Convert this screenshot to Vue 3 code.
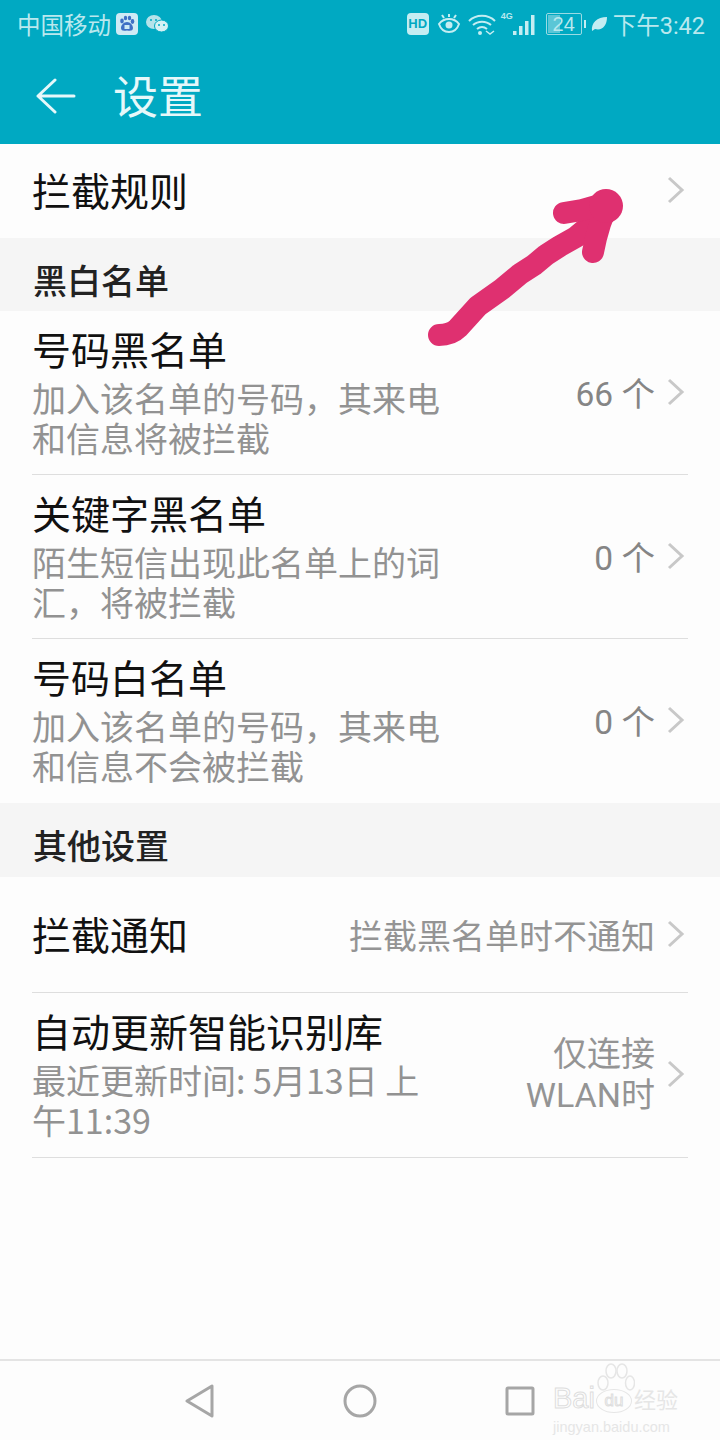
<script setup>
const blacklist = [
  { title: '号码黑名单', desc: '加入该名单的号码，其来电和信息将被拦截', value: '66 个' },
  { title: '关键字黑名单', desc: '陌生短信出现此名单上的词汇，将被拦截', value: '0 个' },
  { title: '号码白名单', desc: '加入该名单的号码，其来电和信息不会被拦截', value: '0 个' },
]
</script>

<template>
  <div class="page">
    <header class="head">
      <div class="status">
        <span class="carrier">中国移动</span>
        <svg class="baidu" width="22" height="22" viewBox="0 0 22 22">
          <rect x="0" y="0" width="22" height="22" rx="4" fill="#cfeaf5" />
          <g fill="#3f6fc4">
            <ellipse cx="6" cy="8" rx="1.800" ry="2.400" />
            <ellipse cx="9.500" cy="5" rx="1.700" ry="2.300" />
            <ellipse cx="13.500" cy="5" rx="1.700" ry="2.300" />
            <ellipse cx="16.500" cy="8.500" rx="1.800" ry="2.400" />
            <path d="M11 9c-3 0-6 3-6 6 0 3 3 3 6 2.400 3 .6 6 .6 6-2.400 0-3-3-6-6-6z" />
          </g>
          <rect x="8.500" y="12" width="5" height="4" fill="#cfeaf5" />
        </svg>
        <svg class="wechat" width="24" height="20" viewBox="0 0 24 20">
          <ellipse cx="9" cy="8" rx="8" ry="7" fill="#b5e3ea" />
          <ellipse cx="16.500" cy="12" rx="7" ry="6" fill="#d6f1f4" stroke="#00a9c2" stroke-width="1" />
          <circle cx="6" cy="6" r="1" fill="#00a9c2" />
          <circle cx="11" cy="6" r="1" fill="#00a9c2" />
          <circle cx="14" cy="11" r="1" fill="#00a9c2" />
          <circle cx="19" cy="11" r="1" fill="#00a9c2" />
        </svg>
        <span class="grow"></span>
        <span class="hd">HD</span>
        <svg class="eye" width="24" height="22" viewBox="0 0 24 22" fill="none" stroke="#c4edf2" stroke-width="2">
          <path d="M2 11c3-4 6-5 10-5s7 1 10 5c-2 6-6 8-10 8s-8-2-10-8z" />
          <circle cx="12" cy="12" r="3.500" fill="#c4edf2" stroke="none" />
          <path d="M12 1v3M5 2l2 3M19 2l-2 3" />
        </svg>
        <svg class="wifi" width="28" height="24" viewBox="0 0 28 24" fill="none" stroke="#c4edf2" stroke-width="2">
          <path d="M1 9c7-7 19-7 26 0M5 13c5-4.500 13-4.500 18 0M9 17c3-2.500 7-2.500 10 0" />
          <circle cx="12" cy="21" r="2" fill="#c4edf2" stroke="none" />
          <path d="M18 19l4 3 4-3" stroke-width="1.500" />
        </svg>
        <span class="net">4G</span>
        <svg class="signal" width="22" height="24" viewBox="0 0 22 24" fill="#c4edf2">
          <rect x="0" y="19" width="3.500" height="4" />
          <rect x="6" y="14" width="3.500" height="9" />
          <rect x="12" y="9" width="3.500" height="14" />
          <rect x="18" y="3" width="3.500" height="20" />
        </svg>
        <div class="battery"><span class="level"></span><span class="pct">24</span></div>
        <svg class="leaf" width="16" height="16" viewBox="0 0 16 16">
          <path d="M1 15C0 7 6 1 16 1c0 9-5 14-12 12z" fill="#c4edf2" />
        </svg>
        <span class="time">下午3:42</span>
      </div>
      <div class="bar">
        <svg class="back" width="40" height="36" viewBox="0 0 40 36" fill="none" stroke="#e6f8fa" stroke-width="3" stroke-linecap="round" stroke-linejoin="round">
          <path d="M19 2L2 18l17 16M2 18h36" />
        </svg>
        <span class="title">设置</span>
      </div>
    </header>

    <div class="row single first">
      <span class="name">拦截规则</span>
      <svg class="chevron" width="18" height="28" viewBox="0 0 18 28"><path d="M2 2l13 12L2 26" /></svg>
    </div>

    <div class="section">黑白名单</div>
    <div v-for="item in blacklist" :key="item.title" class="row listed">
      <div class="main">
        <div class="name">{{ item.title }}</div>
        <div class="desc">{{ item.desc }}</div>
      </div>
      <span class="value">{{ item.value }}</span>
      <svg class="chevron" width="18" height="28" viewBox="0 0 18 28"><path d="M2 2l13 12L2 26" /></svg>
    </div>

    <div class="section other">其他设置</div>
    <div class="row single notify">
      <span class="name">拦截通知</span>
      <span class="value small">拦截黑名单时不通知</span>
      <svg class="chevron" width="18" height="28" viewBox="0 0 18 28"><path d="M2 2l13 12L2 26" /></svg>
    </div>
    <div class="row update">
      <div class="main wide">
        <div class="name">自动更新智能识别库</div>
        <div class="desc">最近更新时间: 5月13日 上午11:39</div>
      </div>
      <span class="value small wrap">仅连接<br />WLAN时</span>
      <svg class="chevron" width="18" height="28" viewBox="0 0 18 28"><path d="M2 2l13 12L2 26" /></svg>
    </div>

    <div class="spacer"></div>

    <nav class="nav">
      <svg width="30" height="34" viewBox="0 0 30 34" fill="none" stroke="#a6a6a6" stroke-width="3" stroke-linejoin="round">
        <path d="M27 2v30L2 17z" />
      </svg>
      <svg width="34" height="34" viewBox="0 0 34 34" fill="none" stroke="#a6a6a6" stroke-width="3">
        <circle cx="17" cy="17" r="15" />
      </svg>
      <svg width="30" height="30" viewBox="0 0 30 30" fill="none" stroke="#a6a6a6" stroke-width="3">
        <rect x="2" y="2" width="26" height="26" rx="1" />
      </svg>
    </nav>

    <div class="mark">
      <svg class="paw" width="38" height="30" viewBox="0 0 38 30" fill="none" stroke="#e6e6e6" stroke-width="1.500">
        <ellipse cx="6" cy="20" rx="5" ry="7" />
        <ellipse cx="14" cy="8" rx="5" ry="7" />
        <ellipse cx="25" cy="8" rx="5" ry="7" />
        <ellipse cx="33" cy="20" rx="4.500" ry="7" />
      </svg>
      <div class="mark-top">Bai<span class="du">du</span><span class="jy">经验</span></div>
      <div class="mark-url">jingyan.baidu.com</div>
    </div>

    <!-- hand drawn arrow on top of the screenshot -->
    <svg class="scribble" width="720" height="360" viewBox="0 0 720 360" fill="none" stroke="#df3070" stroke-width="22" stroke-linecap="round" stroke-linejoin="round">
      <path d="M439 335c8 0 14-2 19-7l20-22 24-17 18-15 14-9 12-10 14-9 16-9 12-10 18-14" />
      <path d="M564 213l18-3 14-4 12-2M606 208l-6 16-4 14-3 14" />
      <circle cx="606" cy="206" r="17" fill="#df3070" stroke="none" />
    </svg>
  </div>
</template>

<style scoped>
.page {
  position: relative;
  width: 720px;
  height: 1440px;
  overflow: hidden;
  display: flex;
  flex-direction: column;
  background: #fdfdfd;
  font-family: "Noto Sans CJK SC", "Liberation Sans", sans-serif;
}

.head {
  background: #00a9c2;
  height: 144px;
  flex-shrink: 0;
}

.status {
  height: 48px;
  display: flex;
  align-items: center;
  padding: 0 15px 0 17px;
  color: #b9e8ee;
  font-size: 23.500px;
}

.carrier {
  margin-right: 5px;
}

.wechat {
  margin-left: 7px;
}

.grow {
  flex: 1;
}

.hd {
  width: 22px;
  height: 22px;
  border-radius: 4px;
  background: #c4edf2;
  color: #00a9c2;
  font: bold 13px "Liberation Sans", sans-serif;
  line-height: 22px;
  text-align: center;
}

.eye {
  margin-left: 8px;
}

.wifi {
  margin-left: 7px;
}

.net {
  font: bold 9px "Liberation Sans", sans-serif;
  margin: -16px 0 0 5px;
  width: 12px;
}

.battery {
  position: relative;
  width: 34px;
  height: 20px;
  margin-left: 11px;
  border: 1px solid #9adbe4;
  border-radius: 2px;
  font: 20px/20px "Liberation Sans", sans-serif;
  text-align: center;
}

.battery .level {
  position: absolute;
  left: 1px;
  top: 1px;
  bottom: 1px;
  width: 36%;
  background: #5bc6d6;
}

.battery .pct {
  position: relative;
}

.battery::after {
  content: "";
  position: absolute;
  right: -5px;
  top: 6px;
  width: 2px;
  height: 8px;
  background: #c4edf2;
}

.leaf {
  margin-left: 9px;
}

.time {
  margin-left: 6px;
  font-family: Roboto, "Noto Sans CJK SC", sans-serif;
}

.bar {
  height: 96px;
  display: flex;
  align-items: center;
  padding-left: 36px;
}

.title {
  margin-left: 37px;
  margin-top: -3px;
  color: #e6f8fa;
  font-size: 45px;
  line-height: 1;
}

.row {
  position: relative;
  display: flex;
  align-items: center;
  margin: 0 32px;
  height: 164px;
  flex-shrink: 0;
  border-bottom: 1px solid #dedede;
  box-sizing: border-box;
}

.row.listed:nth-of-type(5) {
  border-bottom: 0;
}

.row.single {
  height: 94px;
  border-bottom: 0;
}

.row.notify {
  height: 116px;
  border-bottom: 1px solid #dedede;
}

.row.update {
  height: 165px;
}

.main {
  width: 410px;
  flex-shrink: 0;
}

.main.wide {
  width: 392px;
}

.name {
  color: #111;
  font-size: 39px;
  line-height: 50px;
  margin-top: -5px;
  white-space: nowrap;
}

.row.single .name {
  line-height: 1;
  margin-top: -3px;
}

.desc {
  margin-top: 5px;
  color: #929292;
  font-size: 34px;
  line-height: 40px;
}

.value {
  margin-left: auto;
  margin-right: 12px;
  margin-top: -3px;
  color: #858585;
  font-size: 33.500px;
  font-family: Roboto, "Noto Sans CJK SC", sans-serif;
  white-space: nowrap;
}

.value.small {
  color: #949494;
  margin-top: 0;
  font-size: 34px;
}

.value.wrap {
  text-align: right;
  line-height: 41px;
}

.chevron {
  flex-shrink: 0;
  margin-right: 3px;
  margin-top: -2px;
  fill: none;
  stroke: #c8c8c8;
  stroke-width: 3;
}

.first .chevron {
  margin-left: auto;
}

.section {
  height: 73px;
  flex-shrink: 0;
  box-sizing: border-box;
  padding: 20px 0 0 33px;
  background: #f5f5f5;
  color: #222;
  font-size: 34px;
  font-weight: 500;
  line-height: 44px;
}

.section.other {
  height: 74px;
}

.spacer {
  flex: 1;
}

.nav {
  height: 79px;
  flex-shrink: 0;
  border-top: 2px solid #e4e4e4;
  display: flex;
  align-items: center;
  justify-content: space-between;
  padding: 0 185px;
}

.mark {
  position: absolute;
  left: 553px;
  top: 1363px;
  width: 128px;
  color: #e6e6e6;
  font-family: "Liberation Sans", sans-serif;
}

.paw {
  display: block;
  margin-left: 44px;
}

.mark-top {
  font-size: 29px;
  line-height: 26px;
  white-space: nowrap;
  color: transparent;
  -webkit-text-stroke: 1px #dedede;
  margin-top: -8px;
}

.mark-top .du {
  display: inline-block;
  width: 34px;
  font-size: 17px;
  line-height: 22px;
  text-align: center;
  border: 1px solid #e6e6e6;
  border-radius: 50%;
  vertical-align: 2px;
  margin: 0 2px 0 1px;
}

.mark-top .jy {
  font-family: "Noto Sans CJK SC", sans-serif;
  font-size: 22px;
  -webkit-text-stroke: 0;
  color: #e6e6e6;
}

.mark-url {
  font-size: 14.500px;
  line-height: 18px;
  margin-top: 5px;
  white-space: nowrap;
}

.scribble {
  position: absolute;
  left: 0;
  top: 0;
  pointer-events: none;
}
</style>
